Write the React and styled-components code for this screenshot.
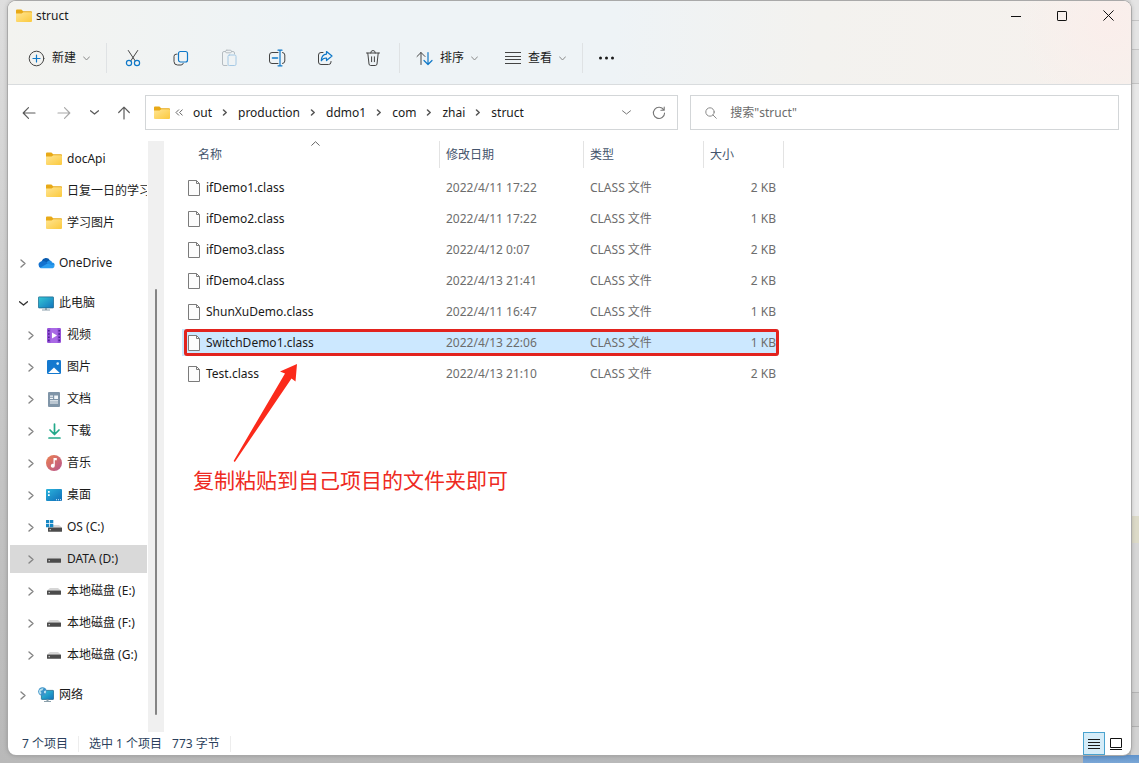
import React from "react";
import styled, { createGlobalStyle, css } from "styled-components";

const GlobalStyle = createGlobalStyle`
  *, *::before, *::after { box-sizing: border-box; }
  body { margin: 0; }
  body, button, input, table {
    font-family: "Noto Sans", "Noto Sans CJK SC", sans-serif;
    font-size: 12px;
    line-height: 16px;
    color: #1a1a1a;
  }
  button { border: 0; padding: 0; background: none; }
  a { color: inherit; text-decoration: none; }
  svg { display: block; flex: none; }
`;

const Desktop = styled.div`
  display: flex;
  min-height: 100vh;
  padding: 1px 8px 8px;
  background:
    linear-gradient(#5f93cb, #7ba7d6) right bottom / 56px 8px no-repeat,
    linear-gradient(
      #e4e4e4 20px, #c4c4c4 20px 21px, #e4e4e4 21px 49px, #c4c4c4 49px 50px,
      #dedede 50px 83px, #c4c4c4 83px 84px, #e8e8e8 84px 516px, #dcdac8 516px 543px,
      #d6d6d6 543px 692px, #b4b4b4 692px 693px, #cdcdcd 693px 726px, #b0b0b0 726px 727px, #d2d2d2 727px
    ) right top / 8px 100% no-repeat,
    linear-gradient(#dedede, #c4c4c4 60%, #b9b9b9);
`;

const Window = styled.div`
  display: flex;
  flex-direction: column;
  flex: 1;
  min-width: 0;
  background: #fff;
  border-radius: 8px;
  overflow: hidden;
  box-shadow: 0 0 0 1px #a9a9a9, 0 0 5px rgba(0, 0, 0, 0.25);
`;

const Header = styled.header`
  border-bottom: 1px solid #d9dcde;
  background:
    radial-gradient(circle at 98% 30%, #faeeeb, transparent 90px),
    linear-gradient(93deg, #f3f3f0 0, #eef3f6 26%, #eef3f6 54%, #f3f2ef 72%, #f6f1ed 100%);
`;

const TitleBar = styled.div`
  display: flex;
  align-items: center;
  height: 29px;
  padding-left: 8px;
`;

const Title = styled.h1`
  flex: 1;
  margin: 0 0 0 4px;
  font-size: 12px;
  font-weight: 400;
`;

const CaptionButton = styled.button`
  display: grid;
  place-items: center;
  width: 46px;
  height: 28px;
`;

const CommandBar = styled.div`
  display: flex;
  align-items: center;
  height: 54px;
  padding: 2px 0 0 20px;
`;

const MenuButton = styled.button`
  display: flex;
  align-items: center;
  gap: 7px;
  height: 32px;
`;

const ViewMenu = styled(MenuButton)`
  margin-left: 27px;
`;

const ToolButton = styled.button`
  display: grid;
  place-items: center;
  width: 48px;
  height: 32px;
`;

const Divider = styled.span`
  flex: none;
  width: 1px;
  height: 30px;
  margin: 0 ${(p) => p.$after || 0}px 0 ${(p) => p.$before || 0}px;
  background: #dfe2e4;
`;

const StatusDivider = styled(Divider)`
  height: 16px;
  background: #ededed;
`;

const NavRow = styled.div`
  display: flex;
  align-items: center;
  padding: 10px 12px 11px 6px;
`;

const NavButton = styled.button`
  display: grid;
  place-items: center;
  width: ${(p) => p.$width || 30}px;
  height: 32px;
`;

const field = css`
  display: flex;
  align-items: center;
  height: 35px;
  border: 1px solid #d3d6d8;
  min-width: 0;
`;

const AddressBar = styled.nav`
  ${field}
  flex: 21 1 0;
  margin-left: 1px;
  padding-left: 8px;
`;

const Crumbs = styled.div`
  display: flex;
  align-items: center;
  flex: 1;
  gap: 10px;
  margin-left: 5px;
  white-space: nowrap;
`;

const SearchBox = styled.label`
  ${field}
  flex: 16 1 0;
  margin-left: 12px;
  padding: 0 14px;
  gap: 13px;
`;

const SearchInput = styled.input`
  flex: 1;
  min-width: 0;
  border: 0;
  padding: 0;
  outline: 0;
  background: none;
  &::placeholder { color: #6b6b6b; opacity: 1; }
`;

const Body = styled.div`
  display: flex;
  flex: 1;
  min-height: 0;
`;

const Sidebar = styled.nav`
  display: flex;
  flex-direction: column;
  gap: 4px;
  width: 140px;
  flex: none;
  padding: 4px 1px 20px 2px;
  overflow: hidden;
`;

const TreeItem = styled.a`
  display: flex;
  align-items: center;
  height: 28px;
  flex: none;
  padding-left: ${(p) => (p.$level ? 17 : 9)}px;
  margin-top: ${(p) => (p.$group ? 8 : 0)}px;
  background: ${(p) => (p.$selected ? "#d9d9d9" : "transparent")};
  white-space: nowrap;
  overflow: hidden;
`;

const TreeIcon = styled.span`
  display: grid;
  place-items: center;
  width: 18px;
  margin: 0 4px 0 11px;
  flex: none;
`;

const Expander = styled.span`
  display: grid;
  place-items: center;
  width: 7px;
  flex: none;
`;

const ScrollTrack = styled.div`
  display: flex;
  justify-content: center;
  width: 16px;
  flex: none;
  padding: 148px 0 17px;
  background: #f0f0f0;
`;

const ScrollThumb = styled.div`
  width: 2px;
  border-radius: 1px;
  background: #858585;
`;

const Pane = styled.main`
  position: relative;
  flex: 1;
  min-width: 0;
  padding-left: 18px;
`;

const FileTable = styled.table`
  width: 602px;
  table-layout: fixed;
  border-collapse: collapse;
  border-spacing: 0;
`;

const HeadCell = styled.th`
  position: relative;
  width: ${(p) => p.$width}px;
  height: 31px;
  padding: 0 0 4px;
  font-weight: 400;
  text-align: left;
  color: #44546c;
`;

const HeadLabel = styled.div`
  height: 27px;
  padding-left: ${(p) => (p.$first ? 16 : 6)}px;
  line-height: 27px;
  border-right: 1px solid #e3e3e3;
`;

const SortMark = styled.span`
  position: absolute;
  top: 0;
  left: 129px;
`;

const Row = styled.tr`
  position: relative;
  z-index: 0;
  ${(p) =>
    p.$selected &&
    css`
      td:first-child::before {
        content: "";
        position: absolute;
        z-index: -1;
        inset: 2px 6px 2px 0;
        background: #cce8ff;
      }
      td:first-child::after {
        content: "";
        position: absolute;
        inset: 2px 5px 2px 2px;
        border: 3px solid #e2231e;
        border-radius: 3px;
        pointer-events: none;
      }
    `}
`;

const Cell = styled.td`
  height: 31px;
  padding: 0 8px 0 6px;
  color: #6d6d6d;
  text-align: ${(p) => (p.$right ? "right" : "left")};
  white-space: nowrap;
`;

const FileName = styled.a`
  display: flex;
  align-items: center;
  gap: 5px;
  color: #1a1a1a;
`;

const Note = styled.div`
  position: absolute;
  left: 29px;
  top: 223px;
  color: #ee2a22;
`;

const NoteText = styled.p`
  margin: 2px 0 0;
  font-size: 21px;
  line-height: 28px;
  font-weight: 400;
  white-space: nowrap;
`;

const NoteArrow = styled.svg`
  margin-left: 40px;
`;

const StatusBar = styled.footer`
  display: flex;
  align-items: center;
  height: 23px;
  padding: 0 4px 0 14px;
  color: #2b3f5c;
`;

const StatusText = styled.span`
  margin-right: ${(p) => p.$gap}px;
  white-space: nowrap;
`;

const ViewSwitch = styled.div`
  display: flex;
  margin-left: auto;
`;

const ViewButton = styled.button`
  display: grid;
  place-items: center;
  width: 22px;
  height: 23px;
  border: 1px solid ${(p) => (p.$active ? "#4aa3cf" : "transparent")};
  background: ${(p) => (p.$active ? "#d5ecf8" : "transparent")};
`;

const Line = ({ w, h = w, children, color = "#444", sw = 1, ...rest }) => (
  <svg width={w} height={h} viewBox={`0 0 ${w} ${h}`} fill="none" stroke={color} strokeWidth={sw} strokeLinecap="round" strokeLinejoin="round" aria-hidden="true" {...rest}>
    {children}
  </svg>
);

const BLUE = "#0f78c8";

const Folder = () => (
  <svg width="16" height="14" viewBox="0 0 16 14" aria-hidden="true">
    <defs>
      <linearGradient id="folderFront" x1="0" y1="0" x2="1" y2="1">
        <stop offset="0" stopColor="#ffe593" />
        <stop offset="1" stopColor="#fbc93d" />
      </linearGradient>
    </defs>
    <path d="M0 1.5Q0 .5 1 .5H5.4L7.2 2.3H15Q16 2.3 16 3.3V7H0Z" fill="#e8a917" />
    <path d="M0 4.4H5.6L7.4 3.2H15Q16 3.2 16 4.2V12Q16 13 15 13H1Q0 13 0 12Z" fill="url(#folderFront)" />
  </svg>
);

const ChevronDown = ({ w = 7, color = "#8a8a8a", sw = 1 }) => (
  <Line w={w} h={5} color={color} sw={sw}>
    <path d={`M.5 .8L${w / 2} 4L${w - 0.5} .8`} />
  </Line>
);

const ChevronRight = () => (
  <Line w={6} h={9} color="#858585" sw={1.4}>
    <path d="M1 1L5 4.5L1 8" />
  </Line>
);

const CrumbArrow = () => (
  <Line w={6} h={7} color="#555" sw={1.5}>
    <path d="M1.5 1L4.2 3.5L1.5 6" />
  </Line>
);

const PlusCircle = () => (
  <Line w={17}>
    <circle cx="8.5" cy="8.5" r="7.3" />
    <path d="M8.5 5v7M5 8.5h7" stroke={BLUE} strokeWidth="1.2" />
  </Line>
);

const Cut = () => (
  <Line w={16} h={18}>
    <path d="M3.3 1.5L10.3 12M12.7 1.5L5.7 12" />
    <circle cx="4" cy="14" r="2.6" stroke={BLUE} strokeWidth="1.2" />
    <circle cx="12" cy="14" r="2.6" stroke={BLUE} strokeWidth="1.2" />
  </Line>
);

const Copy = () => (
  <Line w={16}>
    <path d="M4 4.2H3.2Q1 4.2 1 6.4V11.5Q1 15 4.5 15H8Q10 15 10.3 13.3" />
    <rect x="5.5" y="1.5" width="9" height="10.5" rx="2" stroke={BLUE} strokeWidth="1.2" />
  </Line>
);

const Paste = () => (
  <Line w={16} h={18} color="#b5bcc1">
    <path d="M6 16.5H3Q1.5 16.5 1.5 15V4Q1.5 2.5 3 2.5H4.5M10.5 2.5H12Q13.5 2.5 13.5 4V5" />
    <rect x="4.5" y="1.2" width="6" height="2.6" rx="1.3" />
    <rect x="7" y="6" width="8" height="10.5" rx="1.3" stroke="#a4c8e4" />
  </Line>
);

const Rename = () => (
  <Line w={18}>
    <path d="M10 3.5H4Q1.5 3.5 1.5 6V12Q1.5 14.5 4 14.5H10M14.5 3.5Q16.8 3.7 16.8 6V12Q16.8 14.3 14.5 14.5" />
    <path d="M12 2V16M10 1.2H14M10 16.8H14" stroke={BLUE} strokeWidth="1.2" />
    <path d="M4.5 9H9.5" stroke={BLUE} strokeWidth="1.6" />
  </Line>
);

const Share = () => (
  <Line w={16}>
    <path d="M6 2.5H4Q1.5 2.5 1.5 5V12Q1.5 14.5 4 14.5H11.5Q14 14.5 14 12V11.5" />
    <path d="M9.5 1.5L15 6L9.5 10.5V8Q6 7.8 4.3 10.8Q4.5 4.5 9.5 4.1Z" stroke={BLUE} strokeWidth="1.2" />
  </Line>
);

const Trash = () => (
  <Line w={16} h={18}>
    <path d="M1.5 4H14.5M5.7 4Q5.7 1.5 8 1.5T10.3 4M2.8 4.2L4 15Q4.2 16.5 5.7 16.5H10.3Q11.8 16.5 12 15L13.2 4.2M6.6 7.8V12.7M9.4 7.8V12.7" />
  </Line>
);

const SortArrows = () => (
  <Line w={17} h={15}>
    <path d="M5 13.5V1.5M1 5.5L5 1.5L9 5.5" />
    <path d="M12 1.5V13.5M8 9.5L12 13.5L16 9.5" stroke={BLUE} strokeWidth="1.2" />
  </Line>
);

const ViewLines = () => (
  <Line w={16} h={12} strokeLinecap="butt">
    <path d="M0 .5H16M0 4.5H16M0 7.5H16M0 11.5H16" />
  </Line>
);

const Dots = () => (
  <svg width="18" height="4" viewBox="0 0 18 4" fill="#1a1a1a" aria-hidden="true">
    <circle cx="2.5" cy="2" r="1.5" />
    <circle cx="8.5" cy="2" r="1.5" />
    <circle cx="14.5" cy="2" r="1.5" />
  </svg>
);

const ArrowLeft = () => (
  <Line w={14} color="#5c5c5c" sw={1.2}>
    <path d="M13 7H1.2M6.5 1.7L1.2 7L6.5 12.3" />
  </Line>
);
const ArrowRight = () => (
  <Line w={14} color="#a8a8a8" sw={1.2}>
    <path d="M1 7H12.8M7.5 1.7L12.8 7L7.5 12.3" />
  </Line>
);
const ArrowUp = () => (
  <Line w={14} color="#5c5c5c" sw={1.2}>
    <path d="M7 13V1.2M1.7 6.5L7 1.2L12.3 6.5" />
  </Line>
);

const Refresh = () => (
  <Line w={14} color="#777" sw={1.1}>
    <path d="M11.8 4A5.6 5.6 0 1 0 12.6 7M12.2 1V4.3H8.9" />
  </Line>
);

const Magnifier = () => (
  <Line w={12} color="#8a8a8a">
    <circle cx="5" cy="5" r="4.2" />
    <path d="M8 8L11.3 11.3" />
  </Line>
);

const FilePage = () => (
  <Line w={13} h={16} color="#7b7b7b" strokeLinecap="butt" strokeLinejoin="miter">
    <path d="M.5 .5H8.5L11.5 3.5V15.5H.5Z" fill="#fcfcfc" />
    <path d="M8.5 .5V3.5H11.5" />
  </Line>
);

const CloudIcon = () => (
  <svg width="17" height="12" viewBox="0 0 17 12" aria-hidden="true">
    <path d="M3.6 4.3A4.6 4.6 0 0 1 12 3.4L9 8L3 8Z" fill="#0a5cb0" />
    <path d="M3.9 4.2Q6 3.8 8 5L13 8.5L2.5 11Q.5 10 .5 7.6T3.9 4.2Z" fill="#1372cf" />
    <path d="M8.5 5.4Q9.8 3.2 12.2 3.4Q14 4 14 5.6Q16.7 5.8 16.7 8.4L13 9.5Z" fill="#1f8de4" />
    <path d="M2 10.7L9.5 6.5Q11.6 7.3 16.5 8.7Q16.2 11.3 13.5 11.3H3.8Q2.6 11.3 2 10.7Z" fill="#2b9df0" />
  </svg>
);

const MonitorIcon = () => (
  <svg width="16" height="15" viewBox="0 0 16 15" aria-hidden="true">
    <defs>
      <linearGradient id="screen" x1="0" y1="0" x2="1" y2="1">
        <stop offset="0" stopColor="#35c9d6" />
        <stop offset="1" stopColor="#1273bd" />
      </linearGradient>
    </defs>
    <rect x=".4" y=".9" width="15.2" height="11" rx=".6" fill="url(#screen)" stroke="#20698f" strokeWidth=".8" />
    <path d="M7 12H9V13.5H12V14.5H4V13.5H7Z" fill="#8ba0ab" />
  </svg>
);

const VideoIcon = () => (
  <svg width="14" height="15" viewBox="0 0 14 15" aria-hidden="true">
    <rect width="14" height="15" rx="1.3" fill="#9652d8" />
    <rect x="3.5" width="7" height="15" fill="#a969e5" />
    <path d="M1 2h1.6v1.6H1zM1 5.2h1.6v1.6H1zM1 8.4h1.6V10H1zM1 11.6h1.6v1.6H1zM11.4 2H13v1.6h-1.6zM11.4 5.2H13v1.6h-1.6zM11.4 8.4H13V10h-1.6zM11.4 11.6H13v1.6h-1.6z" fill="#4d2391" />
    <path d="M5 4.5L10 7.5L5 10.5Z" fill="#fff" />
  </svg>
);

const PictureIcon = () => (
  <svg width="14" height="14" viewBox="0 0 14 14" aria-hidden="true">
    <rect width="14" height="14" rx="1.2" fill="#1479cf" />
    <path d="M1.2 13L7 7.4L12.8 13Z" fill="#fff" />
    <circle cx="10.7" cy="3.6" r="1.3" fill="#d8f1ff" />
  </svg>
);

const DocumentIcon = () => (
  <svg width="12" height="15" viewBox="0 0 12 15" aria-hidden="true">
    <rect width="12" height="15" rx="1" fill="#8095a8" />
    <path d="M2 3.5H5V4.7H2zM2 5.8H5V7H2zM6.2 3.5H10V7H6.2zM2 8.2H10V9.4H2zM2 10.4H10V11.6H2z" fill="#f3f7fa" />
  </svg>
);

const DownloadIcon = () => (
  <Line w={13} h={16} color="#23a98a" sw={1.7}>
    <path d="M6.5 1V11M2 7L6.5 11.5L11 7M1 15H12" />
  </Line>
);

const MusicIcon = () => (
  <svg width="16" height="16" viewBox="0 0 16 16" aria-hidden="true">
    <defs>
      <linearGradient id="disc" x1="0" y1="0" x2="1" y2="1">
        <stop offset="0" stopColor="#ec8150" />
        <stop offset="1" stopColor="#b6548f" />
      </linearGradient>
    </defs>
    <circle cx="8" cy="8" r="8" fill="url(#disc)" />
    <path d="M7.5 3H10.8V5.2H8.8V10.8A2 2 0 1 1 7.5 8.9Z" fill="#fff" />
  </svg>
);

const DesktopIcon = () => (
  <svg width="16" height="12" viewBox="0 0 16 12" aria-hidden="true">
    <defs>
      <linearGradient id="desk" x1="0" y1="0" x2="1" y2="1">
        <stop offset="0" stopColor="#2bb4dc" />
        <stop offset="1" stopColor="#0f6db8" />
      </linearGradient>
    </defs>
    <rect width="16" height="12" rx="1" fill="url(#desk)" />
    <path d="M2 2H3.7V3.7H2zM2 5.2H3.7V6.9H2z" fill="#fff" />
    <path d="M10 10.2H11V11.2H10zM12 10.2H13V11.2H12zM14 10.2H15V11.2H14z" fill="#d9f2ff" />
  </svg>
);

const DriveShape = () => (
  <g>
    <path d="M3 0H11L14 2.5H0Z" fill="#d6d6d6" />
    <rect y="2.5" width="14" height="4.2" rx=".5" fill="#4b4b4b" />
    <rect x="1.5" y="4.2" width="1.5" height="1" fill="#dcdcdc" />
  </g>
);

const DriveIcon = () => (
  <svg width="14" height="7" viewBox="0 0 14 7" aria-hidden="true">
    <DriveShape />
  </svg>
);

const SystemDriveIcon = () => (
  <svg width="16" height="14" viewBox="0 0 16 14" aria-hidden="true">
    <g transform="translate(2 5)">
      <DriveShape />
    </g>
    <path d="M0 0H3.3V3.3H0zM4 0H7.3V3.3H4zM0 4H3.3V7.3H0zM4 4H7.3V7.3H4z" fill="#1687c4" />
  </svg>
);

const NetworkIcon = () => (
  <svg width="16" height="16" viewBox="0 0 16 16" aria-hidden="true">
    <rect x="3.4" y="3.4" width="12.2" height="9" rx=".6" fill="url(#screen)" stroke="#20698f" strokeWidth=".8" />
    <path d="M8.5 12.5H10.5V14H13V15H6V14H8.5Z" fill="#8ba0ab" />
    <circle cx="4.5" cy="4.5" r="4.3" fill="#3c93c9" />
    <path d="M1.2 3Q3 .8 5.5 1.3L4.5 3.2L2.5 4L3.5 6L2.6 7.5Q.4 6 1.2 3ZM6 4L8 3.5Q8.5 5 7.5 6.5L6 6Z" fill="#b9e0ee" />
  </svg>
);

const DetailsView = () => (
  <Line w={12} h={11} color="#1a1a1a" strokeLinecap="butt">
    <path d="M0 1.5H12M0 4.5H12M0 7.5H12M0 10.5H12" />
  </Line>
);

const LargeView = () => (
  <Line w={12} h={12} color="#111" strokeLinecap="butt" strokeLinejoin="miter">
    <path d="M.5 .5H11.5V9.5H.5ZM0 11.5H12" />
  </Line>
);

const tools = [
  ["剪切", Cut],
  ["复制", Copy],
  ["粘贴", Paste],
  ["重命名", Rename],
  ["共享", Share],
  ["删除", Trash],
];

const crumbs = ["out", "production", "ddmo1", "com", "zhai", "struct"];

const tree = [
  { label: "docApi", icon: Folder, level: 1, leaf: true },
  { label: "日复一日的学习", icon: Folder, level: 1, leaf: true },
  { label: "学习图片", icon: Folder, level: 1, leaf: true },
  { label: "OneDrive", icon: CloudIcon, group: true },
  { label: "此电脑", icon: MonitorIcon, group: true, open: true },
  { label: "视频", icon: VideoIcon, level: 1 },
  { label: "图片", icon: PictureIcon, level: 1 },
  { label: "文档", icon: DocumentIcon, level: 1 },
  { label: "下载", icon: DownloadIcon, level: 1 },
  { label: "音乐", icon: MusicIcon, level: 1 },
  { label: "桌面", icon: DesktopIcon, level: 1 },
  { label: "OS (C:)", icon: SystemDriveIcon, level: 1 },
  { label: "DATA (D:)", icon: DriveIcon, level: 1, selected: true },
  { label: "本地磁盘 (E:)", icon: DriveIcon, level: 1 },
  { label: "本地磁盘 (F:)", icon: DriveIcon, level: 1 },
  { label: "本地磁盘 (G:)", icon: DriveIcon, level: 1 },
  { label: "网络", icon: NetworkIcon, group: true },
];

const columns = [
  ["名称", 258],
  ["修改日期", 144],
  ["类型", 120],
  ["大小", 80],
];

const files = [
  ["ifDemo1.class", "2022/4/11 17:22", "2 KB"],
  ["ifDemo2.class", "2022/4/11 17:22", "1 KB"],
  ["ifDemo3.class", "2022/4/12 0:07", "2 KB"],
  ["ifDemo4.class", "2022/4/13 21:41", "2 KB"],
  ["ShunXuDemo.class", "2022/4/11 16:47", "1 KB"],
  ["SwitchDemo1.class", "2022/4/13 22:06", "1 KB"],
  ["Test.class", "2022/4/13 21:10", "2 KB"],
];

export default function App() {
  return (
    <Desktop>
      <GlobalStyle />
      <Window>
        <Header>
          <TitleBar>
            <Folder />
            <Title>struct</Title>
            <CaptionButton aria-label="最小化">
              <Line w={10} color="#111" strokeLinecap="butt"><path d="M0 5.5H10" /></Line>
            </CaptionButton>
            <CaptionButton aria-label="最大化">
              <Line w={10} color="#111"><rect x=".5" y=".5" width="9" height="9" rx=".6" /></Line>
            </CaptionButton>
            <CaptionButton aria-label="关闭">
              <Line w={11} color="#111"><path d="M.7 .7L10.3 10.3M10.3 .7L.7 10.3" /></Line>
            </CaptionButton>
          </TitleBar>
          <CommandBar>
            <MenuButton>
              <PlusCircle />
              新建
              <ChevronDown />
            </MenuButton>
            <Divider $before={16} $after={2} />
            {tools.map(([label, Icon]) => (
              <ToolButton key={label} aria-label={label}>
                <Icon />
              </ToolButton>
            ))}
            <Divider $before={2} $after={16} />
            <MenuButton>
              <SortArrows />
              排序
              <ChevronDown />
            </MenuButton>
            <ViewMenu>
              <ViewLines />
              查看
              <ChevronDown />
            </ViewMenu>
            <Divider $before={16} />
            <ToolButton aria-label="更多">
              <Dots />
            </ToolButton>
          </CommandBar>
        </Header>

        <NavRow>
          <NavButton aria-label="后退"><ArrowLeft /></NavButton>
          <NavButton aria-label="前进" $width={40}><ArrowRight /></NavButton>
          <NavButton aria-label="最近" $width={20}><ChevronDown w={9} color="#5c5c5c" sw={1.3} /></NavButton>
          <NavButton aria-label="向上" $width={40}><ArrowUp /></NavButton>
          <AddressBar aria-label="地址">
            <Folder />
            <Crumbs>
              <Line w={8} h={7} color="#666"><path d="M3.7 .8L1 3.5L3.7 6.2M7.3 .8L4.6 3.5L7.3 6.2" /></Line>
              {crumbs.map((name, i) => (
                <React.Fragment key={name}>
                  {i > 0 && <CrumbArrow />}
                  <a href={`#${name}`}>{name}</a>
                </React.Fragment>
              ))}
            </Crumbs>
            <NavButton aria-label="历史"><ChevronDown w={9} color="#777" /></NavButton>
            <NavButton aria-label="刷新" $width={36}><Refresh /></NavButton>
          </AddressBar>
          <SearchBox>
            <Magnifier />
            <SearchInput type="text" aria-label="搜索" placeholder={'搜索"struct"'} />
          </SearchBox>
        </NavRow>

        <Body>
          <Sidebar aria-label="导航窗格">
            {tree.map(({ label, icon: Icon, level, leaf, group, open, selected }) => (
              <TreeItem key={label} href="#" $level={level} $group={group} $selected={selected}>
                <Expander>
                  {!leaf && (open ? <ChevronDown w={9} color="#333" sw={1.4} /> : <ChevronRight />)}
                </Expander>
                <TreeIcon><Icon /></TreeIcon>
                {label}
              </TreeItem>
            ))}
          </Sidebar>
          <ScrollTrack><ScrollThumb /></ScrollTrack>
          <Pane>
            <FileTable>
              <thead>
                <tr>
                  {columns.map(([label, width], i) => (
                    <HeadCell key={label} $width={width} scope="col">
                      <HeadLabel $first={i === 0}>{label}</HeadLabel>
                      {i === 0 && (
                        <SortMark>
                          <Line w={9} h={5} color="#666"><path d="M.7 4.3L4.5 .7L8.3 4.3" /></Line>
                        </SortMark>
                      )}
                    </HeadCell>
                  ))}
                </tr>
              </thead>
              <tbody>
                {files.map(([name, date, size]) => (
                  <Row key={name} $selected={name === "SwitchDemo1.class"}>
                    <Cell>
                      <FileName href={`#${name}`}>
                        <FilePage />
                        {name}
                      </FileName>
                    </Cell>
                    <Cell>{date}</Cell>
                    <Cell>CLASS 文件</Cell>
                    <Cell $right>{size}</Cell>
                  </Row>
                ))}
              </tbody>
            </FileTable>
            <Note>
              <NoteArrow width="66" height="100" viewBox="0 0 66 100" aria-hidden="true">
                <path d="M64 0L47 7.5L52 9.5L.6 97L1.8 98L58.5 14.5L62.5 17.5Z" fill="#fb2a1b" />
              </NoteArrow>
              <NoteText>复制粘贴到自己项目的文件夹即可</NoteText>
            </Note>
          </Pane>
        </Body>

        <StatusBar>
          <StatusText $gap={10}>7 个项目</StatusText>
          <StatusDivider $after={10} />
          <StatusText $gap={10}>选中 1 个项目</StatusText>
          <StatusText $gap={10}>773 字节</StatusText>
          <StatusDivider />
          <ViewSwitch>
            <ViewButton $active aria-label="详细信息"><DetailsView /></ViewButton>
            <ViewButton aria-label="大图标"><LargeView /></ViewButton>
          </ViewSwitch>
        </StatusBar>
      </Window>
    </Desktop>
  );
}
